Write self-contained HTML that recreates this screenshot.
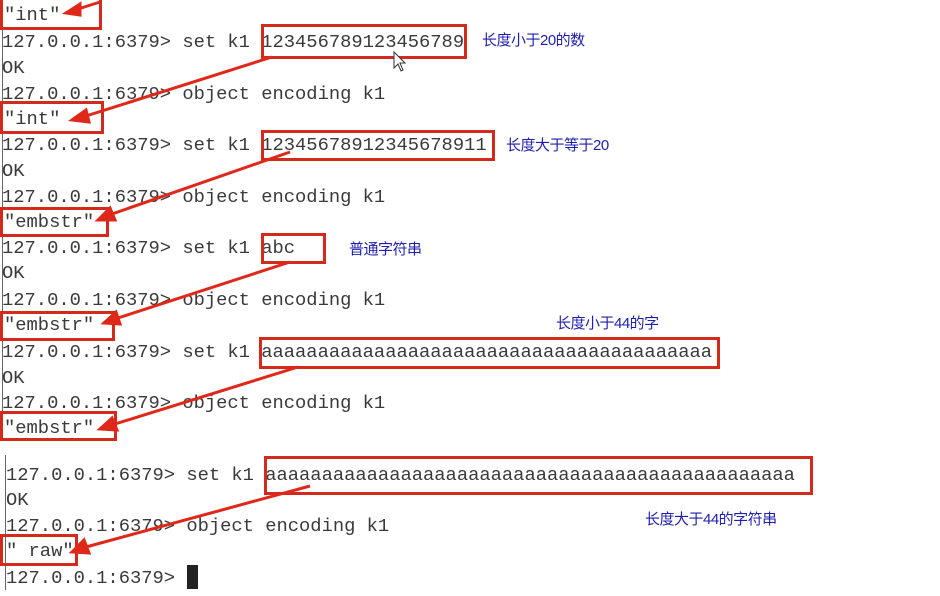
<!DOCTYPE html>
<html><head><meta charset="utf-8"><style>
html,body{margin:0;padding:0;width:940px;height:596px;overflow:hidden;background:#fff}
.t{position:absolute;font-family:"Liberation Mono","DejaVu Sans Mono",monospace;font-size:18.8px;color:#3a3a3a;white-space:pre;line-height:22px}
.b{position:absolute;border:3px solid #d42a1e;box-sizing:border-box}
.n{position:absolute;font-family:"Liberation Sans","Noto Sans CJK SC",sans-serif;font-size:15px;color:#1f1fae;white-space:pre;letter-spacing:-0.5px}
</style></head><body>
<div style="position:absolute;left:2px;top:0;width:1px;height:440px;background:#666"></div>
<div style="position:absolute;left:5px;top:455px;width:1px;height:135px;background:#666"></div>

<div class="t" style="left:4px;top:4px">"int"</div>
<div class="t" style="left:2px;top:31px">127.0.0.1:6379> set k1 123456789123456789</div>
<div class="t" style="left:2px;top:57px">OK</div>
<div class="t" style="left:2px;top:83px">127.0.0.1:6379> object encoding k1</div>
<div class="t" style="left:4px;top:108px">"int"</div>
<div class="t" style="left:2px;top:134px">127.0.0.1:6379> set k1 12345678912345678911</div>
<div class="t" style="left:2px;top:160px">OK</div>
<div class="t" style="left:2px;top:186px">127.0.0.1:6379> object encoding k1</div>
<div class="t" style="left:4px;top:211px">"embstr"</div>
<div class="t" style="left:2px;top:237px">127.0.0.1:6379> set k1 abc</div>
<div class="t" style="left:2px;top:262px">OK</div>
<div class="t" style="left:2px;top:289px">127.0.0.1:6379> object encoding k1</div>
<div class="t" style="left:4px;top:314px">"embstr"</div>
<div class="t" style="left:2px;top:341px">127.0.0.1:6379> set k1 aaaaaaaaaaaaaaaaaaaaaaaaaaaaaaaaaaaaaaaa</div>
<div class="t" style="left:2px;top:367px">OK</div>
<div class="t" style="left:2px;top:392px">127.0.0.1:6379> object encoding k1</div>
<div class="t" style="left:4px;top:417px">"embstr"</div>

<div class="t" style="left:6px;top:464px">127.0.0.1:6379> set k1 aaaaaaaaaaaaaaaaaaaaaaaaaaaaaaaaaaaaaaaaaaaaaaa</div>
<div class="t" style="left:6px;top:489px">OK</div>
<div class="t" style="left:6px;top:515px">127.0.0.1:6379> object encoding k1</div>
<div class="t" style="left:6px;top:540px">" raw"</div>
<div class="t" style="left:6px;top:567px">127.0.0.1:6379> </div>
<div style="position:absolute;left:187px;top:565px;width:11px;height:24px;background:#222"></div>

<div class="b" style="left:0;top:-4px;width:102px;height:34px"></div>
<div class="b" style="left:261px;top:24px;width:206px;height:35px"></div>
<div class="b" style="left:0;top:101px;width:104px;height:33px"></div>
<div class="b" style="left:261px;top:130px;width:234px;height:31px"></div>
<div class="b" style="left:0;top:207px;width:109px;height:30px"></div>
<div class="b" style="left:261px;top:233px;width:65px;height:31px"></div>
<div class="b" style="left:0;top:311px;width:115px;height:30px"></div>
<div class="b" style="left:259px;top:337px;width:461px;height:32px"></div>
<div class="b" style="left:0;top:411px;width:117px;height:30px"></div>
<div class="b" style="left:264px;top:456px;width:549px;height:39px"></div>
<div class="b" style="left:0;top:534px;width:78px;height:32px"></div>

<svg style="position:absolute;left:0;top:0" width="940" height="596">
<g stroke="#e0281a" stroke-width="3" fill="#e0281a">
<line x1="100" y1="2" x2="75" y2="10"/><polygon points="66,13 80,4 80,15"/>
<line x1="272" y1="57" x2="86" y2="116"/><polygon points="72,120 86,110 89,122"/>
<line x1="290" y1="152" x2="112" y2="214"/><polygon points="98,220 110,208 115,220"/>
<line x1="290" y1="262" x2="118" y2="318"/><polygon points="104,323 116,312 120,324"/>
<line x1="298" y1="367" x2="115" y2="424"/><polygon points="100,429 112,418 117,430"/>
<line x1="310" y1="486" x2="86" y2="547"/><polygon points="72,552 84,540 89,553"/>
</g>
<path d="M394,52 l0,16 l4,-4 l3,7 l2,-1 l-3,-7 l5,0 z" fill="#fff" stroke="#333" stroke-width="1"/>
</svg>

<div class="n" style="left:482px;top:29px">长度小于20的数</div>
<div class="n" style="left:506px;top:134px">长度大于等于20</div>
<div class="n" style="left:349px;top:238px">普通字符串</div>
<div class="n" style="left:556px;top:312px">长度小于44的字</div>
<div class="n" style="left:645px;top:508px">长度大于44的字符串</div>
</body></html>
